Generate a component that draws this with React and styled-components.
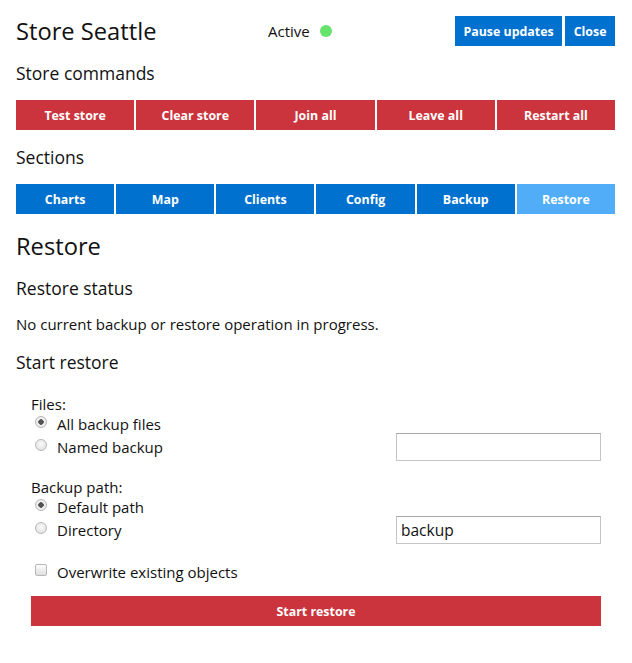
import React from "react";
import styled, { createGlobalStyle } from "styled-components";

const GlobalStyle = createGlobalStyle`
  html, body {
    margin: 0;
    padding: 0;
    background: #ffffff;
  }
  body {
    font-family: "Open Sans", "DejaVu Sans", sans-serif;
    color: #111;
  }
`;

const Page = styled.div`
  padding: 16px 17px 30px 16px;
`;

const Header = styled.div`
  display: flex;
  align-items: center;
  height: 30px;
`;

const Title = styled.h1`
  margin: 0;
  width: 252px;
  font-size: 23.7px;
  font-weight: 400;
  line-height: 30px;
`;

const Status = styled.div`
  display: flex;
  align-items: center;
  gap: 10px;
  font-size: 15px;
`;

const Dot = styled.span`
  width: 12px;
  height: 12px;
  border-radius: 50%;
  background: #66e36a;
`;

const HeaderButtons = styled.div`
  margin-left: auto;
  display: flex;
  gap: 3px;
`;

const Button = styled.button`
  border: 0;
  margin: 0;
  padding: 0 8.5px;
  height: 30px;
  font-family: inherit;
  font-size: 12.4px;
  font-weight: 700;
  color: #fff;
  background: ${({ $tone }) =>
    $tone === "red" ? "#cb343d" : $tone === "light" ? "#52adf8" : "#0071ce"};
  cursor: pointer;
`;

const SubTitle = styled.h3`
  margin: ${({ $m }) => $m || "0"};
  font-size: 17.5px;
  font-weight: 400;
  line-height: 24px;
`;

const BigTitle = styled.h2`
  margin: 17px 0 0;
  font-size: 23.7px;
  font-weight: 400;
  line-height: 30px;
`;

const ButtonRow = styled.div`
  display: grid;
  grid-template-columns: repeat(${({ $n }) => $n}, 1fr);
  gap: 2px;
  margin-top: 15px;
`;

const Text = styled.p`
  margin: 14px 0 0;
  font-size: 15px;
  line-height: 20px;
`;

const Form = styled.div`
  padding: 20px 14px 0 15px;
`;

const Group = styled.div`
  margin-bottom: 19px;
`;

const GroupLabel = styled.div`
  padding-top: 3px;
  font-size: 15px;
  line-height: 15px;
`;

const OptionRow = styled.label`
  display: flex;
  align-items: center;
  height: 23px;
  font-size: 15px;
  padding-left: 4px;
`;

const OptionText = styled.span`
  flex: 1;
`;

const Radio = styled.input.attrs({ type: "radio" })`
  appearance: none;
  margin: 0 10px 0 0;
  width: 12px;
  height: 12px;
  border-radius: 50%;
  border: 1px solid #b8b8b8;
  background: radial-gradient(circle at 50% 40%, #fafafa, #dcdcdc);
  position: relative;
  top: -2px;
  &:checked {
    background: radial-gradient(circle, #555 0 2.5px, #f4f4f4 3px, #dcdcdc 100%);
  }
`;

const Check = styled.input.attrs({ type: "checkbox" })`
  appearance: none;
  margin: 0 10px 0 0;
  width: 12px;
  height: 12px;
  border-radius: 2px;
  border: 1px solid #b8b8b8;
  background: linear-gradient(#fdfdfd, #dedede);
  position: relative;
  top: -2px;
`;

const TextInput = styled.input`
  box-sizing: border-box;
  width: 205px;
  height: 28px;
  border: 1px solid #c4c4c4;
  border-top-color: #a8a8a8;
  padding: 0 4px;
  font-family: inherit;
  font-size: 15.5px;
  color: #111;
  outline: none;
`;

const WideButton = styled(Button)`
  display: block;
  width: 100%;
  margin-top: 13px;
`;

export default function App() {
  const commands = ["Test store", "Clear store", "Join all", "Leave all", "Restart all"];
  const sections = ["Charts", "Map", "Clients", "Config", "Backup", "Restore"];
  return (
    <>
      <GlobalStyle />
      <Page>
        <Header>
          <Title>Store Seattle</Title>
          <Status>
            Active
            <Dot />
          </Status>
          <HeaderButtons>
            <Button>Pause updates</Button>
            <Button>Close</Button>
          </HeaderButtons>
        </Header>

        <SubTitle $m="15px 0 0">Store commands</SubTitle>
        <ButtonRow $n={5}>
          {commands.map((c) => (
            <Button key={c} $tone="red">{c}</Button>
          ))}
        </ButtonRow>

        <SubTitle $m="15px 0 0">Sections</SubTitle>
        <ButtonRow $n={6}>
          {sections.map((s) => (
            <Button key={s} $tone={s === "Restore" ? "light" : "blue"}>{s}</Button>
          ))}
        </ButtonRow>

        <BigTitle>Restore</BigTitle>
        <SubTitle $m="15px 0 0">Restore status</SubTitle>
        <Text>No current backup or restore operation in progress.</Text>
        <SubTitle $m="16px 0 0">Start restore</SubTitle>

        <Form>
          <Group>
            <GroupLabel>Files:</GroupLabel>
            <OptionRow>
              <Radio name="files" defaultChecked />
              <OptionText>All backup files</OptionText>
            </OptionRow>
            <OptionRow>
              <Radio name="files" />
              <OptionText>Named backup</OptionText>
              <TextInput defaultValue="" />
            </OptionRow>
          </Group>
          <Group>
            <GroupLabel>Backup path:</GroupLabel>
            <OptionRow>
              <Radio name="path" defaultChecked />
              <OptionText>Default path</OptionText>
            </OptionRow>
            <OptionRow>
              <Radio name="path" />
              <OptionText>Directory</OptionText>
              <TextInput defaultValue="backup" />
            </OptionRow>
          </Group>
          <OptionRow>
            <Check />
            <OptionText>Overwrite existing objects</OptionText>
          </OptionRow>
          <WideButton $tone="red">Start restore</WideButton>
        </Form>
      </Page>
    </>
  );
}
